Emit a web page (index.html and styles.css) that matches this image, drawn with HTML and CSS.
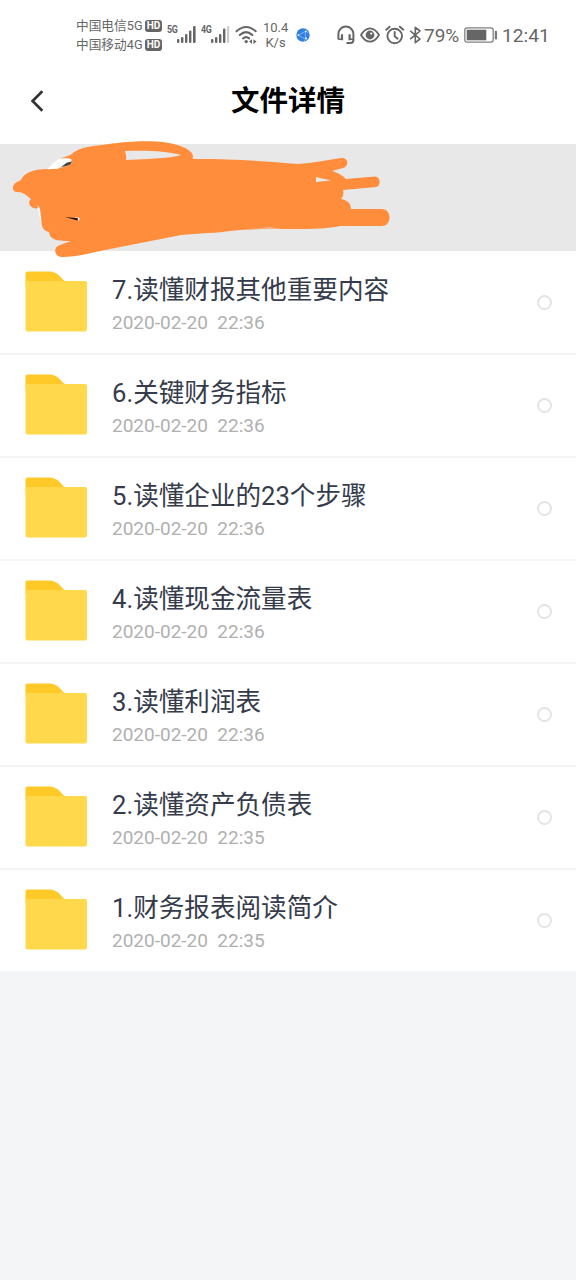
FILE: index.html
```html
<!DOCTYPE html>
<html lang="zh-CN">
<head>
<meta charset="utf-8">
<meta name="viewport" content="width=device-width, initial-scale=1">
<title>文件详情</title>
<link rel="stylesheet" href="styles.css">
</head>
<body>
<header class="status">
  <div class="carriers">
    <div class="carrier"><span>中国电信5G</span><b class="hd">HD</b></div>
    <div class="carrier"><span>中国移动4G</span><b class="hd">HD</b></div>
  </div>
  <div class="signal"><span class="net">5G</span>
    <svg width="20" height="18" viewBox="0 0 20 18" fill="#666"><rect x="0" y="13" width="2.4" height="4" rx="1"/><rect x="4" y="11" width="2.4" height="6" rx="1"/><rect x="8" y="8" width="2.4" height="9" rx="1"/><rect x="12" y="4.5" width="2.4" height="12.5" rx="1"/><rect x="16" y="0" width="2.6" height="17" rx="1"/></svg>
  </div>
  <div class="signal"><span class="net">4G</span>
    <svg width="20" height="18" viewBox="0 0 20 18" fill="#666"><rect x="0" y="13" width="2.4" height="4" rx="1"/><rect x="4" y="11" width="2.4" height="6" rx="1"/><rect x="8" y="8" width="2.4" height="9" rx="1"/><rect x="12" y="2.5" width="2.4" height="14.5" rx="1"/><rect x="16" y="0" width="2.2" height="17" rx="1" fill="#ccc"/></svg>
  </div>
  <svg class="wifi" width="24" height="20" viewBox="0 0 24 20" fill="none" stroke="#666" stroke-width="2" stroke-linecap="round"><path d="M1.5 6.3Q11 -2.2 20.7 6.3M4.8 10Q11 4.2 17.4 10M8 13.4Q11 10.8 14.2 13.4"/><circle cx="11.2" cy="16.6" r="1.7" fill="#666" stroke="none"/><path d="M14.2 16.6L17 14.2V19ZM21.6 16.6L18.4 14.2V19Z" fill="#666" stroke="none"/></svg>
  <div class="speed"><span>10.4</span><span>K/s</span></div>
  <svg class="globe" width="14" height="14" viewBox="0 0 14 14"><circle cx="7" cy="7" r="6.7" fill="#2f7fe0"/><path d="M2.2 7.2L9.8 3.2Q8.2 7.5 10.2 10.6Q6.5 10.5 2.2 7.2M9.8 3.2Q12 4 12.8 5.6M10.2 10.6L8 13" fill="none" stroke="#8fc1f8" stroke-width=".8"/><circle cx="9.8" cy="3.3" r=".9" fill="#e4f1ff"/><circle cx="10.2" cy="10.5" r="1" fill="#e4f1ff"/><circle cx="2.3" cy="7.2" r=".9" fill="#e4f1ff"/></svg>
  <svg class="headset" width="18" height="20" viewBox="0 0 18 20" fill="none" stroke="#666" stroke-width="2"><path d="M1.4 14.5V9A7.2 7.2 0 0 1 16.4 9V15Q16.4 18 13.5 18H9.5"/><path d="M5 9.3V15.2M12.6 9.3V15.2" stroke-width="2.2"/><path d="M1.4 14.2H5.5M12 14.2H16.4" stroke-width="1.6"/></svg>
  <svg class="eye" width="20" height="16" viewBox="0 0 20 16" fill="none" stroke="#666" stroke-width="1.8"><path d="M1 8Q5 1.3 10 1.3T19 8Q15 14.7 10 14.7T1 8Z"/><circle cx="10" cy="8" r="4.4" fill="#666" stroke="none"/><circle cx="11.2" cy="6.6" r="1.1" fill="#fff" stroke="none"/></svg>
  <svg class="alarm" width="20" height="20" viewBox="0 0 20 20" fill="none" stroke="#666" stroke-width="1.9" stroke-linecap="round"><circle cx="9.7" cy="11" r="7.3"/><path d="M9.7 7V11.2L12.5 13.7M1.2 4.7L4.6 1.7M18.3 4.7L14.9 1.7"/></svg>
  <svg class="bt" width="13" height="18" viewBox="0 0 13 18" fill="none" stroke="#666" stroke-width="1.6" stroke-linejoin="round"><path d="M1.2 4.8L11 13L6.3 16.7V1.3L11 5L1.2 13.2"/></svg>
  <span class="percent">79%</span>
  <svg class="battery" width="34" height="16" viewBox="0 0 34 16"><rect x=".8" y=".8" width="28.4" height="14.4" rx="2.4" fill="#fff" stroke="#808080" stroke-width="1.3"/><rect x="2.7" y="2.7" width="19.6" height="10.6" fill="#666"/><rect x="30.8" y="3.7" width="2.2" height="8.8" rx=".7" fill="#777"/></svg>
  <time class="clock">12:41</time>
</header>
<nav class="topbar">
  <svg class="back" width="14" height="22" viewBox="0 0 14 22" fill="none" stroke="#333" stroke-width="2.7"><path d="M12.3 1.2L2.6 11L12.3 20.8"/></svg>
  <h1>文件详情</h1>
</nav>
<section class="banner">
  <svg class="scribble" width="400" height="130" viewBox="0 130 400 130">
    <path fill="#ff8d3b" d="M13 188C13 183 17 182 21 180C24 173 33 169 47 169H58L66 160L60 158.5C64 157 70 156 73 153C79 148 90 146 102 145C120 142 145 140 163 142C178 144 192 149 193 156C193 159 190 159 200 159C230 159 268 161 298 164C313 163 326 160 341 158C349 157 349 167 343 168L332 171C339 173 343 176 346 179L375 176.5C381 177 381 186 376 187L343 190C344 194 343 197 341 199C347 200 351 203 351 209H382C392 209 392 226 382 226H340C322 230 295 229 270 229C250 229 238 230 230 231C210 234 190 233 176 236L105 250C87 254 75 257 61 257C54 256 53 247 60 245L71 241C60 241 50 241 49 232C44 231 42 228 41.5 222L39 206L37 208.500C30 209 27 202 31 199C26 195 23 192 18 192C14 192 13 190 13 188Z"/>
    <path fill="#e8e8e8" d="M125 151C145 150 169 151 181 155C171 158 159 158.500 126 160C127 155 125 153 125 151Z"/>
    <path fill="#fff" d="M47.500 169.500C51 164.500 57 159 61 158.500C65 158 70 158 71.500 159.500V163C69 166 64 167 58 168Z"/>
    <path fill="#fff" d="M37.500 205L40 209L41.500 222L39 215Z"/>
    <path fill="#4a4542" d="M61 167L67 162.500L72 161.500Q71 166 61 167Z"/>
    <path fill="#e8e8e8" d="M316 177L331 180.500L316 182ZM250 228.300L270 227.500L282 228.500Z"/>
    <path fill="#fff" d="M75 217L79.500 218L79 221Z"/>
    <path fill="#24100a" d="M65 217L78 218.200L77.500 220.500Z"/>
  </svg>
</section>
<main class="list">
  <article class="row"><svg class="folder" width="62" height="61" viewBox="0 0 62 61"><path fill="#ffc928" d="M.5 2.500Q.5 .5 2.500 .5H24Q31 .5 35.500 6Q38 9.500 41 10.500V14H.5Z"/><path fill="#ffd84b" d="M.5 10H60Q62 10 62 12V58Q62 60.500 60 60.500H2.500Q.5 60.500 .5 58Z"/></svg><div class="info"><h2>7.读懂财报其他重要内容</h2><p>2020-02-20&nbsp; 22:36</p></div><i class="radio"></i></article>
  <article class="row"><svg class="folder" width="62" height="61" viewBox="0 0 62 61"><path fill="#ffc928" d="M.5 2.500Q.5 .5 2.500 .5H24Q31 .5 35.500 6Q38 9.500 41 10.500V14H.5Z"/><path fill="#ffd84b" d="M.5 10H60Q62 10 62 12V58Q62 60.500 60 60.500H2.500Q.5 60.500 .5 58Z"/></svg><div class="info"><h2>6.关键财务指标</h2><p>2020-02-20&nbsp; 22:36</p></div><i class="radio"></i></article>
  <article class="row"><svg class="folder" width="62" height="61" viewBox="0 0 62 61"><path fill="#ffc928" d="M.5 2.500Q.5 .5 2.500 .5H24Q31 .5 35.500 6Q38 9.500 41 10.500V14H.5Z"/><path fill="#ffd84b" d="M.5 10H60Q62 10 62 12V58Q62 60.500 60 60.500H2.500Q.5 60.500 .5 58Z"/></svg><div class="info"><h2>5.读懂企业的23个步骤</h2><p>2020-02-20&nbsp; 22:36</p></div><i class="radio"></i></article>
  <article class="row"><svg class="folder" width="62" height="61" viewBox="0 0 62 61"><path fill="#ffc928" d="M.5 2.500Q.5 .5 2.500 .5H24Q31 .5 35.500 6Q38 9.500 41 10.500V14H.5Z"/><path fill="#ffd84b" d="M.5 10H60Q62 10 62 12V58Q62 60.500 60 60.500H2.500Q.5 60.500 .5 58Z"/></svg><div class="info"><h2>4.读懂现金流量表</h2><p>2020-02-20&nbsp; 22:36</p></div><i class="radio"></i></article>
  <article class="row"><svg class="folder" width="62" height="61" viewBox="0 0 62 61"><path fill="#ffc928" d="M.5 2.500Q.5 .5 2.500 .5H24Q31 .5 35.500 6Q38 9.500 41 10.500V14H.5Z"/><path fill="#ffd84b" d="M.5 10H60Q62 10 62 12V58Q62 60.500 60 60.500H2.500Q.5 60.500 .5 58Z"/></svg><div class="info"><h2>3.读懂利润表</h2><p>2020-02-20&nbsp; 22:36</p></div><i class="radio"></i></article>
  <article class="row"><svg class="folder" width="62" height="61" viewBox="0 0 62 61"><path fill="#ffc928" d="M.5 2.500Q.5 .5 2.500 .5H24Q31 .5 35.500 6Q38 9.500 41 10.500V14H.5Z"/><path fill="#ffd84b" d="M.5 10H60Q62 10 62 12V58Q62 60.500 60 60.500H2.500Q.5 60.500 .5 58Z"/></svg><div class="info"><h2>2.读懂资产负债表</h2><p>2020-02-20&nbsp; 22:35</p></div><i class="radio"></i></article>
  <article class="row"><svg class="folder" width="62" height="61" viewBox="0 0 62 61"><path fill="#ffc928" d="M.5 2.500Q.5 .5 2.500 .5H24Q31 .5 35.500 6Q38 9.500 41 10.500V14H.5Z"/><path fill="#ffd84b" d="M.5 10H60Q62 10 62 12V58Q62 60.500 60 60.500H2.500Q.5 60.500 .5 58Z"/></svg><div class="info"><h2>1.财务报表阅读简介</h2><p>2020-02-20&nbsp; 22:35</p></div><i class="radio"></i></article>
</main>
</body>
</html>
```

FILE: styles.css
```css
* { box-sizing: border-box; }
body {
  margin: 0;
  min-height: 1280px;
  background: #f4f5f7;
  font-family: Roboto, "Noto Sans CJK SC", sans-serif;
}
h1, h2, p { margin: 0; font-weight: 400; }
svg { display: block; flex: none; }

.status {
  display: grid;
  grid-template-columns: 91px 34px 34px 28px 33px 41px 23px 25px 24px 15px 40px 38px auto;
  align-items: center;
  height: 70px;
  padding-left: 76px;
  background: #fff;
  color: #666;
  white-space: nowrap;
}
.carriers { display: flex; flex-direction: column; gap: 1px; }
.carrier { display: flex; align-items: center; gap: 3px; height: 18px; font-size: 12.7px; line-height: 18px; }
.carrier span { width: 66px; }
.hd {
  width: 17px;
  height: 12px;
  border-radius: 3px;
  background: #666;
  color: #fff;
  font-size: 10px;
  line-height: 12px;
  text-align: center;
}
.signal { display: flex; height: 20px; }
.signal svg { margin-top: 1px; }
.net { width: 10px; font: 700 10.5px/10px Roboto, sans-serif; letter-spacing: -.3px; transform: scaleX(.85); transform-origin: left; }
.speed { display: flex; flex-direction: column; width: 25px; text-align: center; font-size: 13px; line-height: 15px; }
.percent { font-size: 19px; }
.clock { font-size: 19.2px; }

.topbar {
  display: grid;
  grid-template-columns: 44px 1fr 44px;
  align-items: center;
  height: 74px;
  padding: 0 0 12px;
  background: #fff;
}
.back { justify-self: end; }
.topbar h1 { padding-top: 2px; text-align: center; color: #000; font-size: 28.5px; line-height: 40px; font-weight: 700; }

.banner { position: relative; height: 107px; background: #e8e8e8; }
.scribble { position: absolute; left: 0; top: -14px; }

.list { padding-top: 1px; background: #fff; }
.row {
  display: flex;
  align-items: flex-start;
  height: 103px;
  padding: 19px 24px 0 25px;
  border-bottom: 2px solid #f4f5f6;
}
.info { flex: 1; padding: 1px 0 0 25px; }
.info h2 { color: #353b4b; font-size: 25.6px; line-height: 37px; }
.info p { margin-top: -1px; color: #b0b0b0; font-size: 19px; line-height: 30px; }
.radio { width: 15px; height: 15px; margin-top: 24px; border: 2px solid #e4e4e4; border-radius: 50%; }
```
